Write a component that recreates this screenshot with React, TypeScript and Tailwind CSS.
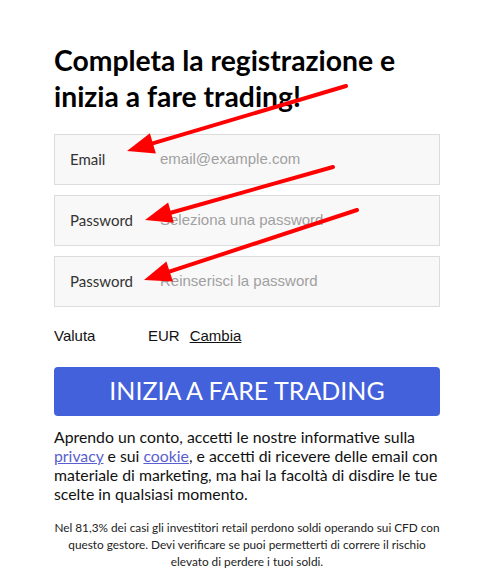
import React from "react";

function Field({ label, placeholder }: { label: string; placeholder: string }) {
  return (
    <div className="flex h-[51px] items-center border border-[#dcdcdc] bg-[#f8f8f8]">
      <span className="w-[105px] pl-[15px] font-['Lato'] text-[15px] text-[#333]">{label}</span>
      <span className="font-['Liberation_Sans'] text-[15px] text-[#a0a0a0]">{placeholder}</span>
    </div>
  );
}

function Arrow({ x1, y1, x2, y2 }: { x1: number; y1: number; x2: number; y2: number }) {
  const dx = x2 - x1;
  const dy = y2 - y1;
  const len = Math.sqrt(dx * dx + dy * dy);
  const ux = dx / len;
  const uy = dy / len;
  const hl = 27;
  const hw = 10.5;
  const bx = x2 - ux * hl;
  const by = y2 - uy * hl;
  const px = -uy;
  const py = ux;
  return (
    <g>
      <line x1={x1} y1={y1} x2={bx + ux * 2} y2={by + uy * 2} stroke="#ff0000" strokeWidth={4} strokeLinecap="round" />
      <polygon
        points={`${x2},${y2} ${bx + px * hw},${by + py * hw} ${bx - px * hw},${by - py * hw}`}
        fill="#ff0000"
      />
    </g>
  );
}

export default function App() {
  return (
    <div className="relative h-[580px] w-[489px] bg-white">
      <div className="ml-[54px] w-[386px] pt-[42px]">
        <h1 className="font-['Lato'] text-[28.3px] font-bold leading-[36px] text-black">
          Completa la registrazione e inizia a fare trading!
        </h1>
        <div className="mt-[20px] flex flex-col gap-[10px]">
          <Field label="Email" placeholder="email@example.com" />
          <Field label="Password" placeholder="Seleziona una password" />
          <Field label="Password" placeholder="Reinserisci la password" />
        </div>
        <div className="mt-[18px] flex items-center font-['Liberation_Sans'] text-[15px] text-[#111]">
          <span className="w-[94px]">Valuta</span>
          <span>EUR</span>
          <span className="ml-[10px] underline">Cambia</span>
        </div>
        <button className="mt-[19px] flex h-[49px] w-full items-center justify-center rounded-[4px] bg-[#4461dc] font-['Lato'] text-[25px] text-white">
          INIZIA A FARE TRADING
        </button>
        <p className="mt-[11px] font-['Lato'] text-[15.8px] leading-[19px] text-[#111]">
          Aprendo un conto, accetti le nostre informative sulla{" "}
          <span className="text-[#5a5fcf] underline">privacy</span> e sui{" "}
          <span className="text-[#5a5fcf] underline">cookie</span>, e accetti di ricevere delle email con
          materiale di marketing, ma hai la facoltà di disdire le tue scelte in qualsiasi momento.
        </p>
        <p className="-mx-[4px] mt-[16px] text-center font-['Lato'] text-[11.8px] leading-[17px] text-[#222]">
          Nel 81,3% dei casi gli investitori retail perdono soldi operando sui CFD con questo gestore. Devi
          verificare se puoi permetterti di correre il rischio elevato di perdere i tuoi soldi.
        </p>
      </div>
      <svg className="pointer-events-none absolute left-0 top-0" width={489} height={580}>
        <Arrow x1={346} y1={86} x2={127} y2={151} />
        <Arrow x1={333} y1={167} x2={145} y2={220} />
        <Arrow x1={357} y1={210} x2={144} y2={280} />
      </svg>
    </div>
  );
}
